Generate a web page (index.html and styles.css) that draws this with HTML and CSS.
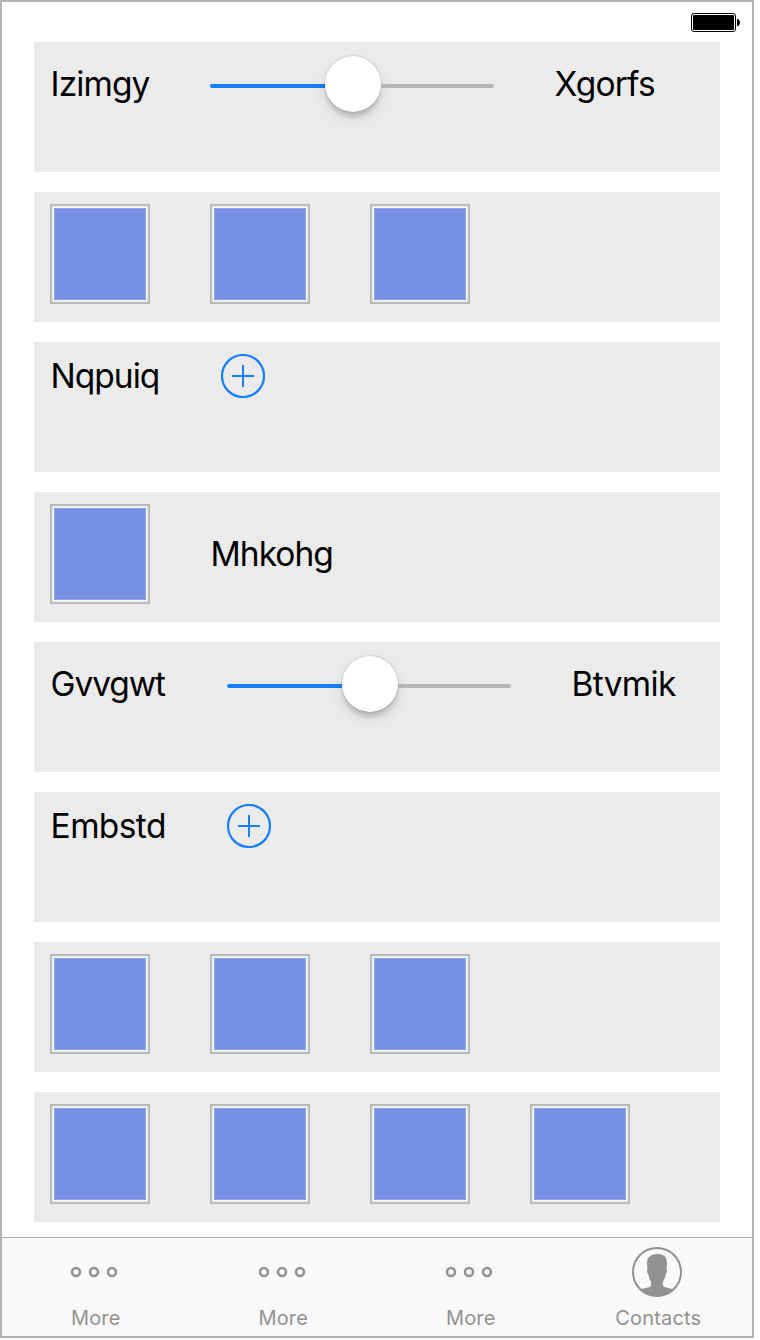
FILE: index.html
```html
<!DOCTYPE html>
<html lang="en">
<head>
<meta charset="utf-8">
<title>Components</title>
<link rel="stylesheet" href="styles.css">
</head>
<body>
<div class="phone">
  <header class="status">
    <svg class="battery" width="50" height="20" viewBox="0 0 50 20">
      <rect x="0.5" y="0.5" width="44" height="18" rx="2.5" fill="#fff" stroke="#000"/>
      <rect x="2" y="2" width="41" height="15" rx="1" fill="#000"/>
      <path d="M46 6h1q2 1 2 3.500t-2 3.500h-1z" fill="#000"/>
    </svg>
  </header>
  <main class="rows">
    <section class="row">
      <span class="label w-izimgy">Izimgy</span>
      <div class="slider"><div class="fill"></div><div class="thumb"></div><div class="rest"></div></div>
      <span class="label w-xgorfs">Xgorfs</span>
    </section>
    <section class="row">
      <div class="tile"></div><div class="tile"></div><div class="tile"></div>
    </section>
    <section class="row">
      <span class="label button-label w-nqpuiq">Nqpuiq</span>
      <svg class="add" width="44" height="44" viewBox="0 0 44 44"><circle cx="22" cy="22" r="21"/><path d="M22 11v22M11 22h22"/></svg>
    </section>
    <section class="row">
      <div class="tile"></div><span class="label tile-label w-mhkohg">Mhkohg</span>
    </section>
    <section class="row">
      <span class="label w-gvvgwt">Gvvgwt</span>
      <div class="slider"><div class="fill"></div><div class="thumb"></div><div class="rest"></div></div>
      <span class="label w-btvmik">Btvmik</span>
    </section>
    <section class="row">
      <span class="label button-label w-embstd">Embstd</span>
      <svg class="add" width="44" height="44" viewBox="0 0 44 44"><circle cx="22" cy="22" r="21"/><path d="M22 11v22M11 22h22"/></svg>
    </section>
    <section class="row">
      <div class="tile"></div><div class="tile"></div><div class="tile"></div>
    </section>
    <section class="row">
      <div class="tile"></div><div class="tile"></div><div class="tile"></div><div class="tile"></div>
    </section>
  </main>
  <nav class="tabs">
    <div class="tab">
      <svg class="icon" width="52" height="52" viewBox="0 0 52 52"><g class="dots"><circle cx="7" cy="26" r="4"/><circle cx="25" cy="26" r="4"/><circle cx="43" cy="26" r="4"/></g></svg>
      <span>More</span>
    </div>
    <div class="tab">
      <svg class="icon" width="52" height="52" viewBox="0 0 52 52"><g class="dots"><circle cx="7" cy="26" r="4"/><circle cx="25" cy="26" r="4"/><circle cx="43" cy="26" r="4"/></g></svg>
      <span>More</span>
    </div>
    <div class="tab">
      <svg class="icon" width="52" height="52" viewBox="0 0 52 52"><g class="dots"><circle cx="7" cy="26" r="4"/><circle cx="25" cy="26" r="4"/><circle cx="43" cy="26" r="4"/></g></svg>
      <span>More</span>
    </div>
    <div class="tab">
      <svg class="icon" width="52" height="52" viewBox="0 0 52 52">
        <g transform="translate(-1 0)">
          <circle cx="26" cy="26" r="24" fill="none" stroke="#929292" stroke-width="2"/>
          <path d="M10 43.500C14 41.500 18.500 42 19.700 40C20.500 38.500 20.300 37 20 35.500C18.500 33.500 17.800 31 17.500 28.500C16.200 27.500 15.700 24.500 16.500 22.500C15.700 18.500 15.500 13 18 11C21 7.300 30 7 33.500 10C36.500 12.500 36.300 18.500 35.500 22.500C36.300 24.500 35.800 27.500 34.500 28.500C34.200 31 33.500 33.500 32 35.500C31.700 37 31.500 38.500 32.300 40C33.500 42 38 41.500 42 43.500A24 24 0 0 1 10 43.500Z" fill="#929292"/>
        </g>
      </svg>
      <span>Contacts</span>
    </div>
  </nav>
</div>
</body>
</html>
```
FILE: styles.css
```css
*, *::before { box-sizing: border-box; }
body { margin: 0; background: #fff; font-family: Inter, "Liberation Sans", sans-serif; }
.phone { width: 754px; height: 1338px; border: 2px solid #b3b3b3; background: #fff; display: flex; flex-direction: column; }
.status { height: 40px; padding: 11px 11px 0 0; display: flex; justify-content: flex-end; }
.battery { display: block; }
.rows { flex: 1; padding: 0 32px; display: flex; flex-direction: column; gap: 20px; }
.row { height: 130px; background: #ebebeb; padding: 12px 16px; display: flex; align-items: flex-start; gap: 60px; }
.label { font-size: 33.5px; line-height: 40px; color: #000; white-space: nowrap; flex: none; margin-top: 10px; text-indent: .6px; }
.button-label { margin-top: 2px; }
.tile-label { margin-top: 30px; }
.w-izimgy { width: 100px; letter-spacing: -.9px; }
.w-nqpuiq { width: 111px; letter-spacing: -1px; }
.w-gvvgwt { width: 117px; letter-spacing: -1.1px; }
.w-embstd { width: 117px; letter-spacing: -.6px; }
.w-xgorfs { letter-spacing: -.8px; }
.w-mhkohg { letter-spacing: -1px; }
.w-btvmik { letter-spacing: -.7px; }
.slider { width: 284px; height: 60px; display: flex; align-items: center; flex: none; }
.fill, .rest { height: 4px; margin-top: 4px; }
.fill { width: 115px; background: #157efb; border-radius: 2px 0 0 2px; }
.rest { flex: 1; background: #b5b5b5; border-radius: 0 2px 2px 0; }
.thumb { width: 56px; height: 56px; border-radius: 50%; background: #fff; flex: none; box-shadow: 0 0 1px 0.5px rgba(0,0,0,.16), 0 6px 4px -1px rgba(0,0,0,.15), 0 6px 16px rgba(0,0,0,.1); }
.tile { width: 100px; height: 100px; flex: none; border: 1px solid #b5b5b5; padding: 2px; background: #e6e8ee; box-shadow: inset 0 0 0 1px #c2c2c2; }
.tile::before { content: ""; display: block; height: 94px; border: 1px solid #f5f7fe; background: #758fe2; box-shadow: inset 0 0 0 1px #8ea3e8; }
.add { display: block; flex: none; fill: none; stroke: #157efb; stroke-width: 2; }
.add circle { stroke-width: 2.2; }
.tabs { height: 99px; border-top: 1px solid #b2b2b2; background: #f9f9f9; display: flex; }
.tab { flex: 1; display: flex; flex-direction: column; align-items: center; padding-top: 8px; color: #929292; font-size: 20px; line-height: 24px; letter-spacing: .2px; }
.icon { display: block; margin-bottom: 8px; margin-left: -.8px; }
.dots { fill: none; stroke: #929292; stroke-width: 2.5; }
```
